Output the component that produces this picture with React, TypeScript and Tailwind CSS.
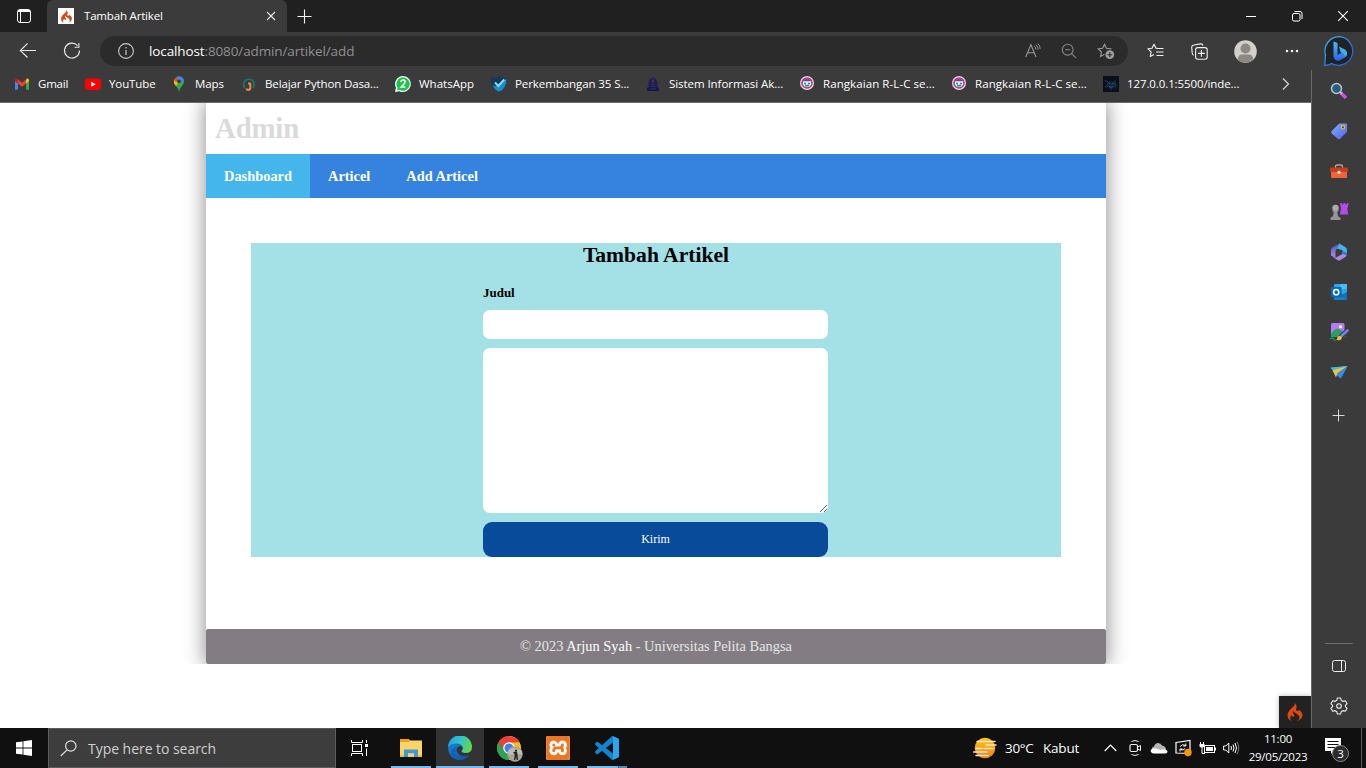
import type { ReactNode } from "react";
import { SiCodeigniter, SiXampp } from "react-icons/si";

type IconProps = { w?: number; h?: number; children: ReactNode; className?: string };

function Icon({ w = 16, h = 16, children, className = "" }: IconProps) {
  return (
    <svg width={w} height={h} viewBox={`0 0 ${w} ${h}`} fill="none" className={`shrink-0 ${className}`}>
      {children}
    </svg>
  );
}

/* ---------- Tab strip ---------- */

function TabStrip() {
  return (
    <header className="flex h-8 shrink-0 bg-[#202020] text-white">
      <div className="flex w-[47px] items-center justify-center">
        <Icon w={14} h={14}>
          <rect x=".5" y=".5" width="13" height="13" rx="2.5" stroke="#fff" />
          <path d="M1 2.500h12M3.500 3v10" stroke="#fff" />
          <path d="M1 1.500h12" stroke="#fff" />
        </Icon>
      </div>
      <div className="flex w-60 items-center rounded-t-md bg-[#3b3b3b] pl-[11px]">
        <div className="flex size-4 items-center justify-center bg-white">
          <SiCodeigniter size={13} color="#d4491b" />
        </div>
        <span className="ml-2.5 w-[182px] text-[11.5px] leading-4 tracking-[-0.18px]">Tambah Artikel</span>
        <Icon w={10} h={10}>
          <path d="M1 1l8 8M9 1L1 9" stroke="#e8e8e8" strokeWidth="1.1" />
        </Icon>
      </div>
      <div className="flex w-[35px] items-center justify-center">
        <Icon w={15} h={15}>
          <path d="M7.5 .5v14M.5 7.500h14" stroke="#f2f2f2" strokeWidth="1.100" />
        </Icon>
      </div>
      <div className="ml-auto flex">
        <div className="flex w-[46px] items-center justify-center">
          <Icon w={10} h={10}>
            <path d="M0 5.5h10" stroke="#fff" />
          </Icon>
        </div>
        <div className="flex w-[46px] items-center justify-center">
          <Icon w={10} h={10} className="overflow-visible">
            <rect x=".5" y="2.5" width="7.500" height="7.500" rx="1.5" stroke="#fff" />
            <path d="M2.500 .5H8a2 2 0 0 1 2 2V8" stroke="#fff" />
          </Icon>
        </div>
        <div className="flex w-[46px] items-center justify-center">
          <Icon w={10} h={10} className="overflow-visible">
            <path d="M.2.2l9.600 9.600M9.800.2L.2 9.800" stroke="#fff" strokeWidth="1.1" />
          </Icon>
        </div>
      </div>
    </header>
  );
}

/* ---------- Toolbar ---------- */

const starPath = "M7.5 1.3l1.9 4 4.4.6-3.2 3.1.8 4.4-3.9-2.1-3.9 2.1.8-4.4L1.2 5.9l4.4-.6z";

function Toolbar() {
  return (
    <div className="flex h-[38px] shrink-0 items-center bg-[#3b3b3b]">
      <Icon w={18} h={16} className="ml-[19px]">
        <path d="M17 7.500H1.500M8.500.5L1.3 7.500l7.200 7" stroke="#e8e8e8" strokeWidth="1.1" />
      </Icon>
      <Icon w={18} h={18} className="ml-[26px]">
        <path d="M14.6 3.6A7.5 7.5 0 1 0 16.5 8.5M15.9 1v4.3h-4.4" stroke="#e8e8e8" strokeWidth="1.1" />
      </Icon>
      <div className="ml-[19px] flex h-[30px] w-[1028px] items-center rounded-full bg-[#2b2b2b]">
        <Icon w={16} h={16} className="ml-[18px]">
          <circle cx="8" cy="8" r="7.4" stroke="#c8c8c8" strokeWidth="1.1" />
          <path d="M8 7v5M8 4v1.5" stroke="#c8c8c8" strokeWidth="1.2" />
        </Icon>
        <span className="ml-[15px] text-[13.5px] leading-5 tracking-[-0.12px] text-[#909090]">
          <span className="text-white">localhost</span>:8080/admin/artikel/add
        </span>
        <Icon w={16} h={16} className="ml-auto">
          <path d="M.8 14L5.900 1.600 11 14M2.600 9.700h6.600" stroke="#9b9b9b" strokeWidth="1.1" />
          <path d="M9.500 3q1.500 1.400 1.200 3.600M11 1.700q2.400 2 2 5M12.800.5q2.600 2.200 2.400 5.600" stroke="#9b9b9b" strokeWidth=".9" />
        </Icon>
        <Icon w={16} h={16} className="ml-5">
          <circle cx="6.7" cy="6.7" r="5.4" stroke="#8a8a8a" strokeWidth="1.1" />
          <path d="M4.2 6.7h5M10.6 10.6l4.4 4.2" stroke="#8a8a8a" strokeWidth="1.1" />
        </Icon>
        <Icon w={19} h={17} className="mr-3 ml-5">
          <path d={starPath} stroke="#9b9b9b" strokeWidth="1.1" />
          <circle cx="12.8" cy="11.7" r="5.4" fill="#2b2b2b" />
          <circle cx="12.8" cy="11.7" r="4.4" fill="#a0a0a0" />
          <path d="M12.8 9.2v5M10.3 11.7h5" stroke="#2b2b2b" strokeWidth="1.1" />
        </Icon>
      </div>
      <Icon w={17} h={16} className="ml-[19px]">
        <path
          d="M10.2 5.4L9 5.2 7 1.2 5 5.2l-4 .6 3.1 3-.8 4.700L7 11.600"
          stroke="#f0f0f0"
          strokeWidth="1.1"
          strokeLinejoin="round"
        />
        <path d="M10 5.5h6.5M9 9h7.5M9.5 12.5h7" stroke="#f0f0f0" strokeWidth="1.1" />
      </Icon>
      <Icon w={17} h={17} className="ml-[27px]">
        <path d="M2.6 12.2A2.5 2.5 0 0 1 1.2 10L.7 4.6A2.4 2.4 0 0 1 3 2L9.5.9A2.2 2.2 0 0 1 12 2.6" stroke="#f0f0f0" strokeWidth="1.1" />
        <rect x="4.6" y="4.6" width="11.6" height="11.6" rx="2.2" stroke="#f0f0f0" strokeWidth="1.1" />
        <path d="M10.4 7v6.8M7 10.4h6.8" stroke="#f0f0f0" strokeWidth="1.1" />
      </Icon>
      <Icon w={23} h={23} className="ml-[26px]">
        <circle cx="11.5" cy="11.5" r="11.3" fill="#d3d0cc" />
        <circle cx="11.5" cy="8.5" r="5" fill="#8c8885" />
        <path d="M3.6 19.4Q4.4 14.5 8 14.5h7q3.600 0 4.400 4.900a11.300 11.300 0 0 1-15.800 0z" fill="#8c8885" />
      </Icon>
      <Icon w={14} h={4} className="ml-7">
        <circle cx="2" cy="2" r="1.300" fill="#f0f0f0" />
        <circle cx="7" cy="2" r="1.300" fill="#f0f0f0" />
        <circle cx="12" cy="2" r="1.300" fill="#f0f0f0" />
      </Icon>
      <Icon w={32} h={32} className="ml-6">
        <defs>
          <linearGradient id="bub" x1="0" y1="0" x2="1" y2="1">
            <stop offset="0" stopColor="#39b6ea" />
            <stop offset="1" stopColor="#1e55e0" />
          </linearGradient>
          <linearGradient id="bing" x1="0" y1="0" x2="0" y2="1">
            <stop offset="0" stopColor="#45c4f5" />
            <stop offset="1" stopColor="#2a62ee" />
          </linearGradient>
        </defs>
        <path d="M16 1.700A14.300 14.300 0 1 1 8.500 28.500Q5.500 30.500 1.800 30.300L2.500 20A14.300 14.300 0 0 1 16 1.700z" fill="#202226" stroke="url(#bub)" strokeWidth="1.300" />
        <path d="M10.500 6.500l4 1.500v12l6-3.500 3.500 1q.5 3.500-3 5.500l-4 2.300q-2.500 1.200-4.500-.3-2-1.500-2-4z" fill="url(#bing)" />
        <path d="M16 11.500l5 2.500q3.500 1.500 3 5-.3 2-2 3.200.3-3.200-2.500-4.400l-2-.8z" fill="#3fb0f2" />
      </Icon>
    </div>
  );
}

/* ---------- Bookmarks ---------- */

const gmail = (
  <Icon>
    <path d="M1 4.500v9.300h3V7z" fill="#4285f4" />
    <path d="M12 7v6.800h3V4.500z" fill="#34a853" />
    <path d="M4 3.500v4l4 3.200 4-3.200v-4L8 6.700z" fill="#ea4335" />
    <path d="M1 4q0-2 2-1.400l1 .9v4L1 5.300z" fill="#c5221f" />
    <path d="M15 4q0-2-2-1.400l-1 .9v4l3-2.200z" fill="#fbbc04" />
  </Icon>
);
const youtube = (
  <Icon>
    <rect y="2.500" width="16" height="11.500" rx="3" fill="#f00" />
    <path d="M6.300 5.800v5l4.400-2.500z" fill="#fff" />
  </Icon>
);
const maps = (
  <Icon>
    <path d="M8 16Q7.500 12.500 5 10 2.500 7.500 3 4.800L8 .2l5 4.600Q13.600 7.500 11 10 8.500 12.500 8 16z" fill="#34a853" />
    <path d="M3.100 7.300Q2.400 5.500 3.500 3.200L8 5.600 5 10q-1.500-1.500-1.900-2.700z" fill="#fbbc04" />
    <path d="M3.200 3.800Q4 1.700 5.700.9L8 4 5 6.300z" fill="#ea4335" />
    <path d="M5.200 1.200Q8-.8 10.800 1q2 1.300 2.200 3.300L10 6 7.500 3.500z" fill="#4285f4" />
    <circle cx="8" cy="5.300" r="1.900" fill="#3b3b3b" />
  </Icon>
);
const dicoding = (
  <Icon>
    <path d="M3.800 11.800A5.200 5.200 0 0 1 8 3.200a5.200 5.200 0 0 1 3.800 8.700" stroke="#137d6b" strokeWidth="1.600" />
    <path d="M9.300 7v4.800q0 2-2 2.200-1.500 0-2-1.500M7 7.500h2.600" stroke="#e78a4e" strokeWidth="2" />
  </Icon>
);
const whatsapp = (
  <Icon className="overflow-visible">
    <path d="M8 0a8 8 0 1 1-3.600 15.200L0 16l1-4.200A8 8 0 0 1 8 0z" fill="#fff" />
    <path d="M8 1.300a6.700 6.700 0 1 1-3.300 12.500l-2.800.6.7-2.600A6.700 6.700 0 0 1 8 1.300z" fill="#1cc24c" />
    <path d="M5.900 6q.2-1.900 2.200-1.900 2 0 2 1.700 0 1.200-1.600 2.800L6.200 11h4.200" stroke="#fff" strokeWidth="1.500" />
  </Icon>
);
const shield = (
  <Icon className="overflow-visible">
    <path d="M0 1.500Q5 2.500 8 .5q3 2 8 1-.2 11.500-8 14.200Q0 13 0 1.500z" fill="#123a5a" />
    <path d="M1.500 9q5 3.500 14-6.500 0 10.500-7.500 13.200Q3.500 14 1.500 9z" fill="#1590cb" />
    <path d="M4 6.500l3.300 3.500 6-6.500" stroke="#8cdcff" strokeWidth="2" />
  </Icon>
);
const sistem = (
  <Icon>
    <path d="M3.500 14V8q0-5 4.500-6.500Q12.500 3 12.500 8v6z" fill="#1c1d50" />
    <path d="M2 11.500h12V15H2z" fill="#17174a" />
    <path d="M6 8.500h4M5.500 10.500h5M5 12.800h6" stroke="#34346e" strokeWidth=".9" />
    <path d="M8 3.500v3" stroke="#8f3f2e" strokeWidth="1.200" />
  </Icon>
);
const lab = (
  <Icon className="overflow-visible">
    <circle cx="8" cy="7" r="7" fill="#ead7e2" />
    <circle cx="8" cy="7" r="5.800" fill="#b94688" />
    <path d="M3.500 3.500h9l-1 1.800h-7z" fill="#70419a" />
    <path d="M4 5.300h8v3.200L10 11H6L4 8.500z" fill="#dff4f2" />
    <path d="M5 6.800h2v1.400H5zM9 6.800h2v1.400H9zM6 8.800h4v1.700H6z" fill="#258d94" />
  </Icon>
);
const monster = (
  <Icon>
    <rect width="16" height="16" fill="#0a0f1a" />
    <path d="M3 4l3 1.500h4L13 3l-.5 5 1 6-3-3-2.500 4-2.500-4L3 13l1-5z" fill="#12293d" />
    <path d="M5.500 7l1.500.7M10.500 7L9 7.700M6 10.500l2 .8 2-.8" stroke="#1f6187" />
    <path d="M2 11l2-2M14 10l-2-3M2 4l1 2" stroke="#1b445f" />
  </Icon>
);

const bookmarks = [
  { icon: gmail, label: "Gmail", width: "w-[71px]", text: "tracking-[-0.2px]" },
  { icon: youtube, label: "YouTube", width: "w-[86px]", text: "tracking-[-0.1px]" },
  { icon: maps, label: "Maps", width: "w-[70px]", text: "tracking-[-0.1px]" },
  { icon: dicoding, label: "Belajar Python Dasa...", width: "w-[154px]", text: "tracking-[-0.13px]" },
  { icon: whatsapp, label: "WhatsApp", width: "w-[96px]", text: "tracking-[0px]" },
  { icon: shield, label: "Perkembangan 35 S...", width: "w-[154px]", text: "tracking-[-0.08px]" },
  { icon: sistem, label: "Sistem Informasi Ak...", width: "w-[154px]", text: "tracking-[-0.06px]" },
  { icon: lab, label: "Rangkaian R-L-C se...", width: "w-[152px]", text: "tracking-[0.08px]" },
  { icon: lab, label: "Rangkaian R-L-C se...", width: "w-[152px]", text: "tracking-[0.08px]" },
  { icon: monster, label: "127.0.0.1:5500/inde...", width: "w-[152px]", text: "tracking-[-0.1px]" },
];

function Bookmarks() {
  return (
    <nav className="flex h-[33px] shrink-0 items-center border-b border-[#6b6868] bg-[#3b3b3b] pb-1 pl-3.5 text-[11.5px] leading-4 text-white">
      {bookmarks.map((b, i) => (
        <div key={i} className={`flex shrink-0 items-center gap-2 whitespace-nowrap ${b.width}`}>
          {b.icon}
          <span className={b.text}>{b.label}</span>
        </div>
      ))}
      <Icon w={8} h={14} className="mr-[21px] ml-auto">
        <path d="M1 1.500L6.500 7 1 12.500" stroke="#d8d8d8" strokeWidth="1.200" />
      </Icon>
    </nav>
  );
}

/* ---------- Web page ---------- */

function AdminPage() {
  return (
    <main className="flex min-h-0 flex-1 flex-col bg-white font-['Liberation_Serif',serif]">
      <div className="flex h-[561px] shrink-0 justify-center overflow-hidden pl-px">
        <div className="flex w-[900px] flex-col shadow-[0_0_18px_2px_#999]">
          <h1 className="h-[51px] pt-[9px] pl-[9px] text-[28.8px] leading-[33px] font-bold tracking-[-0.15px] text-[#dadada]">Admin</h1>
          <nav className="flex h-11 bg-[#3683df] text-[14.4px] leading-[44px] font-bold text-white">
            <a className="w-[104px] bg-[#44b6ec] px-[18px]">Dashboard</a>
            <a className="px-[18px]">Articel</a>
            <a className="px-[18px]">Add Articel</a>
          </nav>
          <section className="m-[45px] mb-[72px] flex h-[314px] flex-col bg-[#a3e1e7]">
            <h2 className="text-center text-[21.6px] leading-6 font-bold text-black">Tambah Artikel</h2>
            <form className="mr-auto ml-[232px] flex w-[345px] flex-col pt-[18px]">
              <label className="mb-[9px] text-[12.96px] leading-4 font-bold text-black">Judul</label>
              <input className="mb-[9px] h-[29px] rounded-[7px] bg-white px-2 outline-none" />
              <textarea className="mb-[9px] h-[165px] resize rounded-[7px] bg-white p-2 outline-none" />
              <button type="button" className="h-[35px] rounded-[9px] bg-[#084b9a] text-[12px] leading-[35px] text-white">
                Kirim
              </button>
            </form>
          </section>
          <footer className="h-[35px] rounded-xs bg-[#837d83] text-center text-[14.4px] leading-[35px] text-[#e6e6e6]">
            © 2023 <span className="text-white">Arjun Syah</span> - Universitas Pelita Bangsa
          </footer>
        </div>
      </div>
      <div className="mt-auto ml-auto flex size-8 items-center justify-center bg-[#222] shadow-[0_0_5px_#bbb]">
        <SiCodeigniter size={18} color="#dd4814" />
      </div>
    </main>
  );
}

/* ---------- Browser side panel ---------- */

const sideIcons = [
  <Icon w={18} h={18} key="search">
    <path d="M11 11l5 5" stroke="#d44bf5" strokeWidth="3.200" />
    <path d="M10 10l1.800 1.800" stroke="#ccc" strokeWidth="2" />
    <circle cx="6.500" cy="6.500" r="5" fill="#1f6188" stroke="#c4c2bf" strokeWidth="1.500" />
  </Icon>,
  <Icon w={18} h={18} key="tag">
    <defs>
      <linearGradient id="tag" x1="0" y1="0" x2="1" y2="1">
        <stop stopColor="#7ab3ff" />
        <stop offset="1" stopColor="#535ff2" />
      </linearGradient>
    </defs>
    <path d="M8.500 2.300Q9 1.500 10 1.500h6q1 0 1 1V9q0 .8-.6 1.400l-6.200 6.400q-1.200 1-2.400 0L1.700 11.500Q.6 10.300 1.700 9.100z" fill="url(#tag)" />
    <circle cx="13" cy="5.300" r="1.700" stroke="#e8c11c" strokeWidth="1.200" fill="#4a4a50" />
  </Icon>,
  <Icon w={18} h={18} key="tools">
    <path d="M5.500 6V4.500Q5.500 3 7 3h4q1.500 0 1.500 1.500V6" stroke="#aaa" strokeWidth="1.300" />
    <rect x="1" y="8.500" width="16" height="7.500" rx="1" fill="#f0643c" />
    <path d="M0 6.500q0-1 1-1h16q1 0 1 1V9q0 1-1 1H1Q0 10 0 9z" fill="#c93d1c" />
    <circle cx="9" cy="10.300" r="1.700" fill="#ddd" />
  </Icon>,
  <Icon w={19} h={18} key="games">
    <path d="M10 1h2v1.200h1.500V1h2v1.200H17V1h1.500L18 5l-.8 1 1 6.500H10L11 6z" fill="#b44bf0" />
    <circle cx="5.500" cy="6" r="3.200" fill="#aeacaa" />
    <path d="M2.500 8.500h6v1.300H7.200l.8 4.500 2.500 1.500V18H.5v-2.200L3 14.300l.8-4.500H2.500z" fill="#979593" />
  </Icon>,
  <Icon w={18} h={18} key="office" className="mt-px">
    <defs>
      <linearGradient id="off" x1="0" y1="0" x2="0" y2="1">
        <stop stopColor="#5157b8" />
        <stop offset="1" stopColor="#b18ae8" />
      </linearGradient>
    </defs>
    <path d="M9.500.5L3 4Q1 5.200 1 7.500v5l4.500 2.300V8q0-1.500 1.500-2.300l3-1.700z" fill="url(#off)" />
    <path d="M9.500.5l6 3.700Q17 5.300 17 7v5l-4.500-2.500V7.200L7 5.500z" fill="#42b3e9" />
    <path d="M17 10.500q0 2.500-1.500 3.500l-5 3q-1.500 1-3 0L2 13.800l3.500 1 7-3.800V9z" fill="#a888e4" />
    <path d="M12.500 8l4.500 2v2.500l-4.500-1.800z" fill="#3474d0" />
  </Icon>,
  <Icon w={18} h={18} key="outlook" className="mt-px">
    <rect x="4" y="1" width="13" height="10" rx="1" fill="#28a8ea" />
    <path d="M10 1h7v5h-7z" fill="#45bdf3" />
    <path d="M4 9l7 3 6-3v7q0 1-1 1H5q-1 0-1-1z" fill="#1681c9" />
    <path d="M17 9l-6 4 5 4q1 0 1-1z" fill="#1571b5" />
    <rect x="1" y="4" width="10.500" height="10.500" rx="1" fill="#0a68ba" />
    <circle cx="6.200" cy="9.200" r="2.600" stroke="#fff" strokeWidth="1.500" />
  </Icon>,
  <Icon w={18} h={19} key="designer" className="overflow-visible">
    <rect x="1" y="1" width="13.500" height="14" rx="1.500" fill="#b77bf0" />
    <path d="M1 12q4-6 7.500-5t6 4v4H1z" fill="#2b9d68" />
    <circle cx="10.500" cy="4.800" r="1.500" fill="#fff" />
    <path d="M17.500 8.500L11 14.500" stroke="#3b3b3b" strokeWidth="4.500" strokeLinecap="round" />
    <path d="M17.500 8.500L11.500 14" stroke="#6f7ff5" strokeWidth="2.700" strokeLinecap="round" />
    <path d="M7 18q0-4.500 3.500-4 2.500 1.500.5 3.500-1.500 1.300-4 .5z" fill="#ffc027" />
    <path d="M0 17q3-2 3.500 0t3.500.5" stroke="#268860" strokeWidth="1.300" />
  </Icon>,
  <Icon w={18} h={18} key="plane" className="overflow-visible">
    <path d="M.5 6l17-2-7 12.500-3.500-3z" fill="#3289e8" />
    <path d="M.5 5.500L17.500 4 5 10z" fill="#45b9ea" />
    <path d="M2.500 8.500L17.500 4 7.500 11 6 15.500z" fill="#f6c52d" />
    <path d="M7.500 11.500l10-7.500-6.500 12.500z" fill="#368af0" />
  </Icon>,
];

function SidePanel() {
  return (
    <aside className="flex w-[55px] shrink-0 flex-col items-center border-l border-[#6b6868] bg-[#3b3b3b] pt-px">
      {sideIcons.map((icon, i) => (
        <div key={i} className="flex h-10 shrink-0 items-center justify-center">
          {icon}
        </div>
      ))}
      <div className="mt-1 flex h-10 shrink-0 items-center pr-px">
        <Icon w={13} h={13}>
          <path d="M6.500.5v12M.5 6.500h12" stroke="#d8d8d8" />
        </Icon>
      </div>
      <div className="mt-auto h-px w-7 bg-[#6e6e6e]" />
      <div className="flex h-[42px] items-center pt-0.5">
        <Icon w={14} h={12}>
          <rect x=".5" y=".5" width="13" height="11" rx="2" stroke="#eee" />
          <path d="M9.500 1v10" stroke="#eee" />
        </Icon>
      </div>
      <div className="flex h-[42px] items-start pt-[11px]">
        <Icon w={18} h={18}>
          <path
            d="M7.300 1h3.400l.5 2.300 1.900 1.100 2.300-.7 1.700 3L15.400 8.300v1.400l1.700 1.600-1.700 3-2.300-.7-1.900 1.100-.5 2.300H7.300l-.5-2.300-1.900-1.100-2.300.7-1.700-3 1.700-1.600V8.300L.9 6.700l1.700-3 2.300.7 1.900-1.100z"
            stroke="#eee"
            strokeWidth="1.100"
            strokeLinejoin="round"
          />
          <circle cx="9" cy="9" r="2.300" stroke="#eee" strokeWidth="1.100" />
        </Icon>
      </div>
    </aside>
  );
}

/* ---------- Taskbar ---------- */

const explorer = (
  <Icon w={24} h={24}>
    <path d="M1 3h9l1.500 2H23v16H1z" fill="#e9a510" />
    <path d="M1 6h9l1-1.500h12V20.500H1z" fill="#fcd566" />
    <path d="M5 13.500h14V21h-4v-3.500H9V21H5z" fill="#3c97df" />
    <path d="M1 19h4v1.500H1zM19 19h4v1.500h-4z" fill="#f2bd3c" />
    <path d="M9 17.500h6v3H9z" fill="#fcd566" />
  </Icon>
);
const edge = (
  <Icon w={24} h={24}>
    <defs>
      <linearGradient id="edgeTop" x1="0" y1=".2" x2="1" y2=".4">
        <stop stopColor="#239fdd" />
        <stop offset=".5" stopColor="#31c3d3" />
        <stop offset="1" stopColor="#63d84b" />
      </linearGradient>
      <linearGradient id="edgeLow" x1="0" y1="0" x2="1" y2="1">
        <stop stopColor="#1b83d7" />
        <stop offset="1" stopColor="#0c4f9c" />
      </linearGradient>
    </defs>
    <path d="M0 11.500A12 12 0 0 1 24 11q0 6-6.500 6-4 0-4-2.200 1.500-1 1.300-3Q14 8 9 8 2 8 0 11.500z" fill="url(#edgeTop)" />
    <path d="M0 12.500Q2 7.500 8.500 7.500q5 0 6 3.500-2-2-4.500 0-3 3 0 6.500 4 4 11.500 1.800A12 12 0 0 1 12 24Q1 23.500 0 12.500z" fill="url(#edgeLow)" />
    <path d="M9.500 10.500q-4.500 4-1.500 9 1.500 3 5 4.400Q7.500 24.500 3.500 20q-1.500-8 6-9.500z" fill="#1263b5" />
  </Icon>
);
const chrome = (
  <Icon w={26} h={26} className="mt-px ml-0.5">
    <path d="M12 12L1.600 6A12 12 0 0 1 22.400 6z" fill="#e94335" />
    <path d="M12 12V0q6.500 0 10.400 6A12 12 0 0 1 12 24z" fill="#fbc116" />
    <path d="M1.600 6L12 24A12 12 0 0 1 1.600 6z" fill="#2fa24f" />
    <path d="M12 12L6.800 15 1.600 6A12 12 0 0 1 22.400 6.500H12z" fill="#e94335" />
    <path d="M1.600 6L7 15l5 2.500 2 1L11.500 24A12 12 0 0 1 1.600 6z" fill="#2fa24f" />
    <circle cx="12" cy="12" r="5.800" fill="#fff" />
    <circle cx="12" cy="12" r="4.500" fill="#3c82f0" />
    <circle cx="18" cy="18" r="7.700" fill="#a9a49b" />
    <path d="M11 15q6-5 13.500-.5l.8 4-3.300-.5-2-1-3 1-5 1z" fill="#c0bcb3" />
    <circle cx="19" cy="14.500" r="1.100" fill="#272522" />
    <path d="M16 16.500l2-1h2l.6 4 .4 4.500h-1.200l-.8-3-.8 3H17l.6-4.500V18z" fill="#272522" />
  </Icon>
);
const xampp = (
  <div className="flex size-6 items-center justify-center rounded-xs bg-white">
    <SiXampp size={24} color="#ee7623" />
  </div>
);
const vscode = (
  <svg width="24" height="24" viewBox="0 0 24 24">
    <path
      fill="#1384cf"
      d="M23.150 2.587L18.210.210a1.494 1.494 0 0 0-1.705.290l-9.460 8.630-4.120-3.128a.999.999 0 0 0-1.276.057L.327 7.261A1 1 0 0 0 .326 8.740L3.899 12 .326 15.260a1 1 0 0 0 .001 1.479L1.650 17.940a.999.999 0 0 0 1.276.057l4.120-3.128 9.460 8.630a1.492 1.492 0 0 0 1.704.290l4.942-2.377A1.500 1.500 0 0 0 24 20.060V3.939a1.500 1.500 0 0 0-.850-1.352zm-5.146 14.861L10.826 12l7.178-5.448v10.896z"
    />
    <path d="M18 .2l5.150 2.387q.850.500.850 1.352v16.121q0 .900-.850 1.353L18 23.800z" fill="#2ba5f0" />
  </svg>
);

function TaskApp({ icon, active = false, stacked = false }: { icon: ReactNode; active?: boolean; stacked?: boolean }) {
  return (
    <div className={`flex w-12 flex-col items-center ${active ? "bg-[#333]" : ""}`}>
      <div className="flex h-[38px] items-center pt-0.5">{icon}</div>
      <div className={`flex h-0.5 justify-end bg-[#76b9ed] ${active ? "w-12" : "w-10"}`}>
        {stacked && <div className="w-[9px] border-l border-[#3b6186] bg-[#5687b3]" />}
      </div>
    </div>
  );
}

function Taskbar() {
  return (
    <div className="flex h-10 shrink-0 bg-[#101010] text-white">
      <div className="flex w-12 items-center justify-center">
        <Icon>
          <path d="M0 2.300l6.600-.9v6.200H0zM7.400 1.300L16 .1v7.500H7.400zM0 8.400h6.600v6.200L0 13.700zM7.400 8.400H16v7.500l-8.600-1.200z" fill="#fff" />
        </Icon>
      </div>
      <div className="flex w-72 items-center border border-[#5d5d5d] bg-[#3d3d3d] pl-[11px]">
        <Icon w={17} h={17}>
          <circle cx="10.800" cy="6" r="5.200" stroke="#e0e0e0" strokeWidth="1.200" />
          <path d="M7 9.800L.8 16" stroke="#e0e0e0" strokeWidth="1.200" />
        </Icon>
        <span className="ml-[11px] pt-0.5 text-[14px] leading-5 tracking-[-0.04px] text-[#d0d0d0]">Type here to search</span>
      </div>
      <div className="flex w-12 items-center justify-center pr-px">
        <Icon w={17} h={16}>
          <path d="M.5 0v2.500h11V0M.5 16v-2.500h11V16" stroke="#fff" />
          <rect x="1.500" y="4.500" width="9" height="7" stroke="#fff" />
          <path d="M15.500 0v3M15.500 8.500V16" stroke="#fff" />
          <rect x="14" y="4" width="3" height="3" fill="#fff" />
        </Icon>
      </div>
      <div className="ml-[3px] flex gap-px">
        <TaskApp icon={explorer} />
        <TaskApp icon={edge} active />
        <TaskApp icon={chrome} />
        <TaskApp icon={xampp} />
        <TaskApp icon={vscode} stacked />
      </div>
      <div className="ml-auto flex items-center">
        <Icon w={25} h={24}>
          <defs>
            <linearGradient id="sun" x1="0" y1="0" x2="0" y2="1">
              <stop stopColor="#ffcb13" />
              <stop offset="1" stopColor="#f37b21" />
            </linearGradient>
          </defs>
          <circle cx="12" cy="12" r="10.300" fill="url(#sun)" />
          <path d="M4 5.500h18M13 9h10M3 12.500h6M11 12.500h9M.5 16H14M3 19.500h12" stroke="#f4e6c8" strokeWidth="1.500" strokeLinecap="round" />
        </Icon>
        <span className="ml-[7px] w-[38px] text-[13.500px] leading-5 tracking-[-0.300px] whitespace-nowrap">30°C</span>
        <span className="w-[61px] text-[13.500px] leading-5 tracking-[-0.200px]">Kabut</span>
        <Icon w={13} h={8}>
          <path d="M.7 7l5.800-5.800L12.300 7" stroke="#fff" strokeWidth="1.200" />
        </Icon>
        <Icon w={13} h={18} className="ml-3">
          <rect x="1" y="5.500" width="7.500" height="7" rx="1.500" stroke="#eee" strokeWidth="1.200" />
          <path d="M8.500 8l3-1.500v5l-3-1.500" stroke="#eee" />
          <path d="M2.500 2.500Q6 .5 9.500 2.500M2.500 15.500q3.500 2 7 0" stroke="#eee" />
        </Icon>
        <Icon w={18} h={12} className="ml-2">
          <path d="M3 10A3 3 0 0 1 4 4.600Q5 1 8 1q3 0 4 2.500Q16 4 16 8v2z" fill="#b4b4b4" />
          <path d="M4 11.500q-3.500-.5-3.300-3Q1.500 6 4.500 6.500 8 6 10 8q1-.8 3-.5 4-.3 4.500 2 0 2-2 2z" fill="#fff" />
        </Icon>
        <Icon w={17} h={18} className="ml-[7px]">
          <path d="M1 3.500l14-2v13L1 14z" stroke="#fff" strokeWidth="1.200" />
          <path d="M5 7.500Q7.500 4.500 10.500 6.500M10.800 4.500v2.500H8.300M10.200 9.500q-2 2.500-4.700 1M5 12.500V10h2.500" stroke="#fff" />
          <circle cx="13" cy="13.500" r="3.700" fill="#ff9500" />
        </Icon>
        <Icon w={17} h={14} className="ml-[7px]">
          <rect x="5.500" y="4.500" width="10" height="7" stroke="#fff" />
          <rect x="7" y="6" width="7" height="4" fill="#fff" />
          <path d="M16.500 6.500v3M1.500 1v2.500M4.500 1v2.500M3 6v6.500h3" stroke="#fff" />
          <path d="M.5 3h5v2.500L4 6.500H2L.5 5.500z" fill="#fff" />
        </Icon>
        <Icon w={17} h={14} className="ml-[7px]">
          <path d="M.6 5h2.200l3-3v10l-3-3H.6z" stroke="#fff" />
          <path d="M8 5q1 2 0 4M10 3.500q2 3.500 0 7M12 2q3 5 0 10" stroke="#fff" />
          <path d="M14 .8q3.500 6.200 0 12.400" stroke="#777" />
        </Icon>
        <div className="ml-2 w-[60px] text-center text-[11.500px] leading-[18px] tracking-[-0.240px] whitespace-nowrap">
          <div>11:00</div>
          <div>29/05/2023</div>
        </div>
        <div className="relative mr-3 ml-[17px] size-6">
          <Icon w={16} h={16} className="mt-0.5">
            <path d="M0 0h16v13H9l-3 3v-3H0z" fill="#fff" />
            <path d="M2.500 3.500h11M2.500 6.500h11M2.500 9.500h8" stroke="#111" />
          </Icon>
          <span className="absolute top-[9px] left-[7px] flex size-[17px] items-center justify-center rounded-full border border-[#888] bg-[#2b2b2b] text-[11.5px] leading-none">
            3
          </span>
        </div>
        <div className="mr-1 h-10 w-px bg-[#5a5a5a]" />
      </div>
    </div>
  );
}

export default function App() {
  return (
    <div className="flex h-[768px] w-[1366px] flex-col overflow-hidden font-['Open_Sans','Noto_Sans',sans-serif]">
      <TabStrip />
      <Toolbar />
      <div className="flex min-h-0 flex-1">
        <div className="flex w-[1311px] flex-col">
          <Bookmarks />
          <AdminPage />
        </div>
        <SidePanel />
      </div>
      <Taskbar />
    </div>
  );
}
